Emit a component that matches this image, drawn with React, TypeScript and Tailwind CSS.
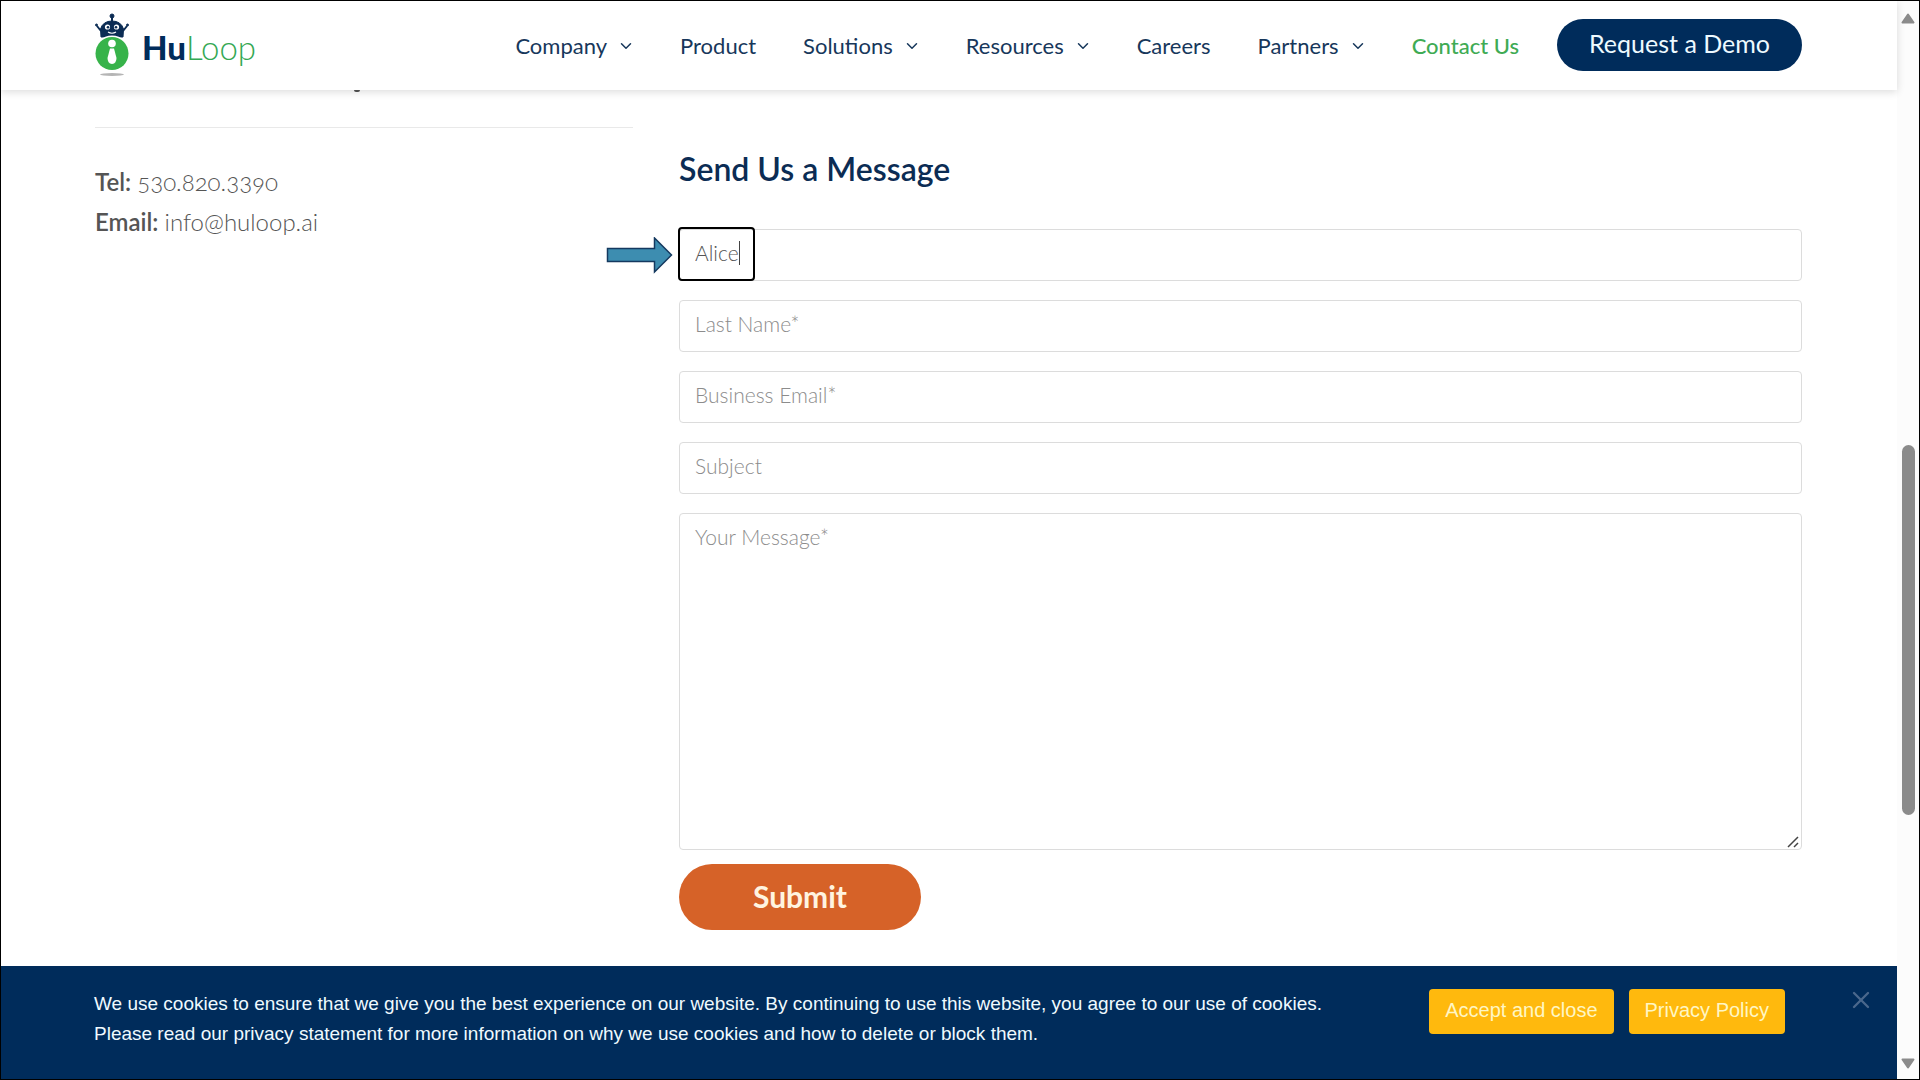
import React from "react";
import { ChevronDown, X } from "lucide-react";

const NAV = [
  { label: "Company", menu: true },
  { label: "Product" },
  { label: "Solutions", menu: true },
  { label: "Resources", menu: true },
  { label: "Careers" },
  { label: "Partners", menu: true },
  { label: "Contact Us", active: true },
];

const FIELDS = [
  { id: "last-name", label: "Last Name*", type: "text" },
  { id: "email", label: "Business Email*", type: "email" },
  { id: "subject", label: "Subject", type: "text" },
];

const fieldCls =
  "block w-full rounded-[4px] border border-[#dcdcdc] bg-white px-[15px] text-[21px] font-light text-[#555] placeholder:text-[#8c8c8c] outline-none";

export default function App() {
  return (
    <div className="flex min-h-screen border border-black bg-white font-['Lato',sans-serif]">
      <div className="flex min-w-0 flex-1 flex-col">
        <Header />
        <main className="grid grid-cols-[538fr_1123fr] gap-[46px] pr-[95px] pl-[94px]">
          <ContactInfo />
          <ContactForm />
        </main>
        <CookieBar />
      </div>
      <Scrollbar />
    </div>
  );
}

function Header() {
  return (
    <header className="relative z-10 flex h-[89px] items-center justify-between bg-white pr-[95px] pb-0.5 pl-[93px] shadow-[0_2px_8px_rgba(0,0,0,0.14)]">
      <a href="#" className="flex items-center gap-3">
        <LogoMark />
        <span className="pt-1 text-[33px] leading-9 text-[#34a853]">
          <span className="font-black text-[#002c5b]">Hu</span>
          <span className="font-light">Loop</span>
        </span>
      </a>
      <div className="flex items-center gap-[38px]">
        <nav className="flex items-center gap-[47px] pt-0.5">
          {NAV.map(n => (
            <a
              key={n.label}
              href="#"
              className={`flex items-center gap-2.5 text-[22px] leading-8 ${n.active ? "font-medium text-[#3fab54]" : "text-[#17375b]"}`}
            >
              {n.label}
              {n.menu && <ChevronDown className="-mr-0.5 size-[18px]" strokeWidth={2} />}
            </a>
          ))}
        </nav>
        <button className="h-[52px] rounded-full bg-[#002c5b] px-8 pb-0.5 text-[25px] text-[#eefaff]">Request a Demo</button>
      </div>
    </header>
  );
}

function ContactInfo() {
  return (
    <section className="text-2xl leading-10 text-[#555]">
      <div className="ml-[259px] h-0.5 w-1.5 rounded-b-full bg-[#555]" />
      <hr className="mt-[35px] mb-[34px] border-[#e9e9e9]" />
      <p><b className="font-semibold">Tel:</b> <span className="font-light oldstyle-nums">530.820.3390</span></p>
      <p><b className="font-semibold">Email:</b> <span className="font-light">info@huloop.ai</span></p>
    </section>
  );
}

function ContactForm() {
  return (
    <form className="pt-[59px]" onSubmit={e => e.preventDefault()}>
      <h2 className="text-[32px] leading-10 font-semibold text-[#0b2c54]">Send Us a Message</h2>
      <div className="mt-10 flex flex-col gap-[19px]">
        <div className="relative">
          <input type="text" aria-label="First Name*" defaultValue="Alice" className={`${fieldCls} h-[52px] pb-1.5`} />
          <div className="pointer-events-none absolute -top-0.5 -left-px h-[54px] w-[77px] rounded-[4px] border-2 border-black" />
          <div className="pointer-events-none absolute top-3 left-[60px] h-6 w-px bg-[#444]" />
          <svg className="absolute top-2 -left-[73px]" width="67" height="38" viewBox="0 0 67 38">
            <path d="M1.5 11.5H48.5V1L65.5 18L48.5 35V24.5H1.5Z" fill="#3d8db0" stroke="#14395f" strokeWidth="1.5" />
          </svg>
        </div>
        {FIELDS.map(f => (
          <input key={f.id} id={f.id} type={f.type} aria-label={f.label} placeholder={f.label} className={`${fieldCls} h-[52px] pb-1.5`} />
        ))}
        <div className="relative">
          <textarea aria-label="Your Message*" placeholder="Your Message*" className={`${fieldCls} h-[337px] resize-none py-[7px] leading-8`} />
          <svg className="pointer-events-none absolute right-[3px] bottom-0.5" width="12" height="12" viewBox="0 0 12 12">
            <path d="M1 11L11 1M7 11L11 7" stroke="#444" strokeWidth="1.5" />
          </svg>
        </div>
      </div>
      <button type="submit" className="mt-3.5 h-[66px] w-[242px] rounded-full bg-[#d66228] pb-0.5 text-3xl font-bold text-[#fff4e0]">
        Submit
      </button>
    </form>
  );
}

function CookieBar() {
  return (
    <div className="mt-auto flex h-[113px] items-start bg-[#002c5b] pr-[22px] pl-[93px] font-['Liberation_Sans',Arial,sans-serif] text-xl">
      <p className="mt-[23px] max-w-[1280px] flex-1 text-[19px] leading-[30px] text-[#effaff]">
        We use cookies to ensure that we give you the best experience on our website. By continuing to use this website, you agree to our use of cookies. Please read our privacy statement for more information on why we use cookies and how to delete or block them.
      </p>
      <div className="mt-[23px] ml-auto flex gap-[15px] leading-[43px] text-[#fff6c4]">
        <button className="h-[45px] rounded-[4px] bg-[#ffb90d] px-4 pb-0.5">Accept and close</button>
        <button className="h-[45px] rounded-[4px] bg-[#ffb90d] px-4 pb-0.5">Privacy Policy</button>
      </div>
      <button aria-label="Close" className="mt-[20px] ml-[62px] text-[#4a688c]">
        <X className="size-7" strokeWidth={2} />
      </button>
    </div>
  );
}

function Scrollbar() {
  return (
    <div className="flex w-[22px] shrink-0 flex-col items-center bg-[#fcfcfc] pt-3 pb-2.5">
      <svg width="14" height="11" viewBox="0 0 14 11">
        <path d="M7 1.5L12.5 9.5H1.5Z" fill="#8b8b8b" stroke="#8b8b8b" strokeWidth="2" strokeLinejoin="round" />
      </svg>
      <div className="flex w-full flex-1 flex-col items-center">
        <div className="flex-[421]" />
        <div className="w-[13px] flex-[369] rounded-full bg-[#8b8b8b]" />
        <div className="flex-[243]" />
      </div>
      <svg width="14" height="11" viewBox="0 0 14 11">
        <path d="M7 9.5L12.5 1.5H1.5Z" fill="#8b8b8b" stroke="#8b8b8b" strokeWidth="2" strokeLinejoin="round" />
      </svg>
    </div>
  );
}

function LogoMark() {
  return (
    <svg width="36" height="64" viewBox="0 0 36 64">
      <ellipse cx="18" cy="61.5" rx="12" ry="1.5" fill="#b5b5b5" />
      <g fill="#0b2c54" stroke="#0b2c54">
        <circle cx="18" cy="3" r="2" />
        <path d="M18 4V10" strokeWidth="2" />
        <path d="M7 24L6.5 16Q9 8 18 8T29.5 16L29 24Z" />
        <path d="M7 18L3 13M29 18L33 13" strokeWidth="2" />
        <circle cx="2.5" cy="12" r="1" />
        <circle cx="33.5" cy="12" r="1" />
      </g>
      <circle cx="13.5" cy="14" r="2.6" fill="#fff" />
      <circle cx="22.5" cy="14" r="2.6" fill="#fff" />
      <circle cx="14" cy="14.2" r="1.3" fill="#0b2c54" />
      <circle cx="22" cy="14.2" r="1.3" fill="#0b2c54" />
      <path d="M14 19Q18 21.5 22 19" fill="none" stroke="#fff" strokeWidth="1.2" />
      <circle cx="18" cy="40" r="17.5" fill="#fff" />
      <circle cx="18" cy="40.5" r="16.5" fill="#37b34a" />
      <circle cx="18" cy="30.5" r="3.8" fill="#fff" />
      <path d="M16 35.5H20L22.5 45Q22.5 50.5 18 51Q13.5 50.5 13.5 45Z" fill="#fff" />
    </svg>
  );
}
